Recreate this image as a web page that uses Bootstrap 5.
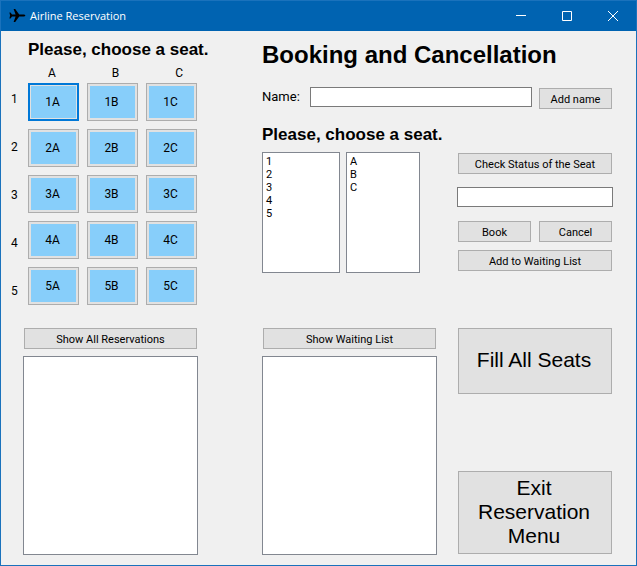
<!DOCTYPE html>
<html lang="en">
<head>
<meta charset="utf-8">
<meta name="viewport" content="width=device-width, initial-scale=1">
<title>Airline Reservation</title>
<link href="https://cdn.jsdelivr.net/npm/bootstrap@5.3.0/dist/css/bootstrap.min.css" rel="stylesheet">
<style>
  body { font: 12px/14px Roboto, "Liberation Sans", sans-serif; color: #000; background: #f0f0f0; }
  .app-window { border: 1px solid #1a72bc; }
  .title-bar { height: 30px; background: #0063b1; color: #fff; font-family: "Open Sans", sans-serif; padding-left: 8px; }
  .title-bar h1 { font-size: 11px; line-height: 16px; font-weight: 400; margin: 0 auto 0 4px; }
  .title-bar button { width: 46px; height: 30px; border: 0; padding: 0; background: none; color: #fff; display: grid; place-items: center; }
  .title-bar svg { display: block; }

  .client { display: grid; grid-template-columns: minmax(0, 188fr) minmax(0, 351fr); grid-template-rows: auto 1fr; column-gap: 64px; padding: 10px 23px 10px 9px; }
  .subtitle { font: 700 17px/18px "Liberation Sans", Arial, sans-serif; margin: 0; white-space: nowrap; }
  .headline { font: 700 24px/28px "Liberation Sans", Arial, sans-serif; margin: 0; white-space: nowrap; }

  .seat-area { display: grid; grid-template-columns: 18px minmax(0, 1fr); }
  .seat-area .subtitle { grid-column: 2; }
  .col-names { grid-column: 2; padding: 7px 15px 3px 20px; }
  .seats { display: grid; grid-template-columns: repeat(3, 1fr); align-content: start; gap: 8px; padding-right: 1px; }
  .row-names { line-height: 48px; margin-top: -8px; padding-left: 1px; }
  .seat { height: 38px; padding: 0 2px 0 0; background: #87cefa; color: #000; border: 1px solid #adadad; box-shadow: inset 0 0 0 2px #e1e1e1; }
  .seat.current { border: 2px solid #0078d7; box-shadow: inset 0 0 0 1px #e1e1e1; }

  .btn-form { font-size: 11px; line-height: 14px; min-height: 21px; padding: 4px 4px 1px; color: #000; background: #e1e1e1; border: 1px solid #adadad; border-radius: 0; }
  .btn-form:hover { color: #000; background: #e5f1fb; border-color: #0078d7; }
  .btn-tall { font: 21px/24px "Liberation Sans", Arial, sans-serif; padding: 2px 6px 4px 4px; }
  .text-field { height: 20px; min-width: 0; padding: 0 3px; border: 1px solid #7a7a7a; border-radius: 0; background: #fff; }
  .list-box { border: 1px solid #828790; border-radius: 0; background: #fff; color: #000; padding: 2px 0; overflow: hidden; appearance: none; outline: 0; font-size: 11px; }
  .list-box option { padding: 0 3px; min-height: 13px; line-height: 13px; }
  .pick-box { height: 121px; }

  .booking, .lower-right { display: grid; grid-template-columns: minmax(0, 175fr) minmax(0, 156fr); column-gap: 20px; }
  .booking { align-content: start; }
  .booking .headline, .name-row { grid-column: 1 / -1; }
  .name-row { margin: 18px 1px 0 0; gap: 7px; }
  .name-row label { width: 41px; font-size: 13px; line-height: 20px; }
  .name-row .btn-form { width: 73px; margin-top: 1px; }
  .pick-row { gap: 6px; margin-top: 8px; padding-right: 17px; }
  .pick-row .rows { flex: 78; min-width: 0; }
  .pick-row .cols { flex: 74; min-width: 0; }
  .booking .subtitle { margin-top: 17px; }
  .seat-actions { padding-top: 44px; }
  .seat-actions .btn-form, .lower .btn-form { margin-left: 1px; margin-right: 1px; }
  .seat-actions .text-field { margin: 13px 0 14px; }
  .seat-actions .pair { gap: 6px; margin-bottom: 8px; }
  .seat-actions .pair .btn-form { flex: 1; }

  .lower { padding-top: 13px; }
  .lower-left { padding-left: 13px; }
  .lower .list-box { margin-top: 7px; min-height: 199px; flex-grow: 1; }
  .fill-all { min-height: 66px; }
  .exit-menu { min-height: 83px; margin-bottom: 1px; }
</style>
<script src="https://cdn.jsdelivr.net/npm/bootstrap@5.3.0/dist/js/bootstrap.bundle.min.js"></script>
</head>
<body>
<div class="app-window min-vh-100 d-flex flex-column">
  <header class="title-bar d-flex align-items-center">
    <svg width="17" height="16" viewBox="0 0 17 16" aria-hidden="true"><path fill="#000" d="M16.5 7.5 15.3 8.5H10.2L6.2 14H4.6L6.6 8.5H3L1.5 10.5H.4L1.1 7.5 .4 4.5H1.5L3 6.5H6.6L4.6 1H6.2L10.2 6.5H15.3Z"/></svg>
    <h1>Airline Reservation</h1>
    <button type="button" aria-label="Minimize"><svg width="10" height="10"><path d="M0 4.5H10" stroke="#fff"/></svg></button>
    <button type="button" aria-label="Maximize"><svg width="10" height="10"><path d="M.5.5H9.5V9.5H.5Z" stroke="#fff" fill="none"/></svg></button>
    <button type="button" aria-label="Close"><svg width="10" height="10"><path d="M0 0 10 10M10 0 0 10" stroke="#fff"/></svg></button>
  </header>

  <main class="client flex-grow-1">
    <section class="seat-area align-content-start">
      <h2 class="subtitle">Please, choose a seat.</h2>
      <div class="col-names d-flex justify-content-between"><span>A</span><span>B</span><span>C</span></div>
      <div class="row-names"><div>1</div><div>2</div><div>3</div><div>4</div><div>5</div></div>
      <div class="seats">
        <button type="button" class="seat current">1A</button><button type="button" class="seat">1B</button><button type="button" class="seat">1C</button>
        <button type="button" class="seat">2A</button><button type="button" class="seat">2B</button><button type="button" class="seat">2C</button>
        <button type="button" class="seat">3A</button><button type="button" class="seat">3B</button><button type="button" class="seat">3C</button>
        <button type="button" class="seat">4A</button><button type="button" class="seat">4B</button><button type="button" class="seat">4C</button>
        <button type="button" class="seat">5A</button><button type="button" class="seat">5B</button><button type="button" class="seat">5C</button>
      </div>
    </section>

    <section class="booking">
      <h2 class="headline">Booking and Cancellation</h2>
      <div class="name-row d-flex align-items-start">
        <label for="passenger">Name:</label>
        <input id="passenger" type="text" class="text-field flex-grow-1">
        <button type="button" class="btn btn-form">Add name</button>
      </div>
      <div>
        <h3 class="subtitle">Please, choose a seat.</h3>
        <div class="pick-row d-flex">
          <select multiple class="list-box pick-box rows" aria-label="Row"><option>1</option><option>2</option><option>3</option><option>4</option><option>5</option></select>
          <select multiple class="list-box pick-box cols" aria-label="Column"><option>A</option><option>B</option><option>C</option></select>
        </div>
      </div>
      <div class="seat-actions d-flex flex-column">
        <button type="button" class="btn btn-form">Check Status of the Seat</button>
        <input type="text" class="text-field" aria-label="Seat status">
        <div class="pair d-flex">
          <button type="button" class="btn btn-form">Book</button>
          <button type="button" class="btn btn-form">Cancel</button>
        </div>
        <button type="button" class="btn btn-form">Add to Waiting List</button>
      </div>
    </section>

    <section class="lower lower-left d-flex flex-column">
      <button type="button" class="btn btn-form">Show All Reservations</button>
      <select multiple class="list-box" aria-label="Reservations"></select>
    </section>

    <section class="lower lower-right">
      <div class="d-flex flex-column">
        <button type="button" class="btn btn-form">Show Waiting List</button>
        <select multiple class="list-box" aria-label="Waiting list"></select>
      </div>
      <div class="d-flex flex-column justify-content-between">
        <button type="button" class="btn btn-form btn-tall fill-all">Fill All Seats</button>
        <button type="button" class="btn btn-form btn-tall exit-menu">Exit Reservation Menu</button>
      </div>
    </section>
  </main>
</div>
</body>
</html>
